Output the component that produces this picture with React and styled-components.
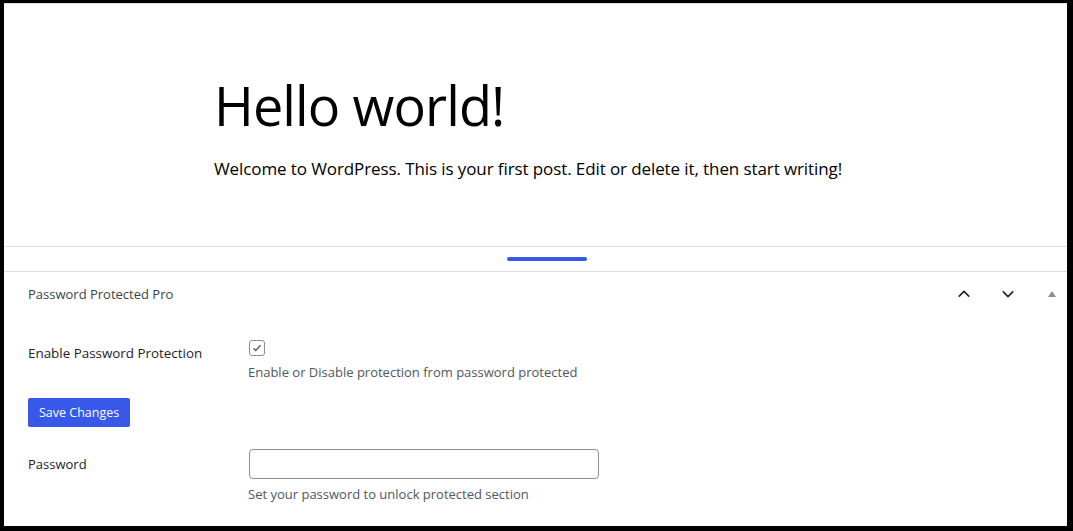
import React from "react";
import styled, { createGlobalStyle } from "styled-components";

const GlobalStyle = createGlobalStyle`
  html, body {
    margin: 0;
    padding: 0;
    background: #fff;
  }
  body {
    font-family: "Open Sans", "Noto Sans", "Liberation Sans", sans-serif;
  }
`;

const Frame = styled.div`
  box-sizing: border-box;
  width: 1073px;
  height: 531px;
  border-style: solid;
  border-color: #000;
  border-width: 3px 6px 5px 4px;
  background: #fff;
  overflow: hidden;
  display: flex;
  flex-direction: column;
`;

const Post = styled.div`
  height: 243px;
  flex-shrink: 0;
  border-top: 1px solid #e0e0e0;
  padding: 0 0 0 210px;
  box-sizing: border-box;
`;

const Title = styled.h1`
  margin: 66px 0 0;
  font-size: 54px;
  font-weight: 400;
  line-height: 70px;
  color: #000;
  letter-spacing: -0.9px;
`;

const Lead = styled.p`
  margin: 16px 0 0;
  font-size: 17px;
  line-height: 26px;
  color: #000;
  letter-spacing: -0.1px;
`;

const Resizer = styled.div`
  height: 24px;
  flex-shrink: 0;
  border-top: 1px solid #dcdcde;
  border-bottom: 1px solid #dcdcde;
  display: flex;
  justify-content: center;
  align-items: center;
`;

const Handle = styled.span`
  width: 80px;
  height: 4px;
  border-radius: 2px;
  background: #3858e9;
  margin-left: 22px;
`;

const Panel = styled.section`
  flex: 1;
  padding: 0 0 0 24px;
`;

const PanelHeader = styled.div`
  box-sizing: border-box;
  height: 45px;
  padding: 0 14px 2px 0;
  display: flex;
  align-items: center;
`;

const PanelTitle = styled.h2`
  flex: 1;
  margin: 0;
  font-size: 13px;
  font-weight: 400;
  color: #3c434a;
`;

const IconButton = styled.button`
  width: 44px;
  height: 32px;
  padding: 0;
  border: 0;
  background: none;
  display: flex;
  align-items: center;
  justify-content: center;
  color: #1e1e1e;
`;

const Toggle = styled.span`
  width: 0;
  height: 0;
  margin-left: 18px;
  margin-right: -3px;
  border-left: 4px solid transparent;
  border-right: 4px solid transparent;
  border-bottom: 6px solid #8c8f94;
`;

const Form = styled.div`
  padding-top: 23px;
  display: flex;
  flex-direction: column;
`;

const Row = styled.div`
  display: grid;
  grid-template-columns: 220px 1fr;
  align-items: start;
`;

const Label = styled.label`
  font-size: ${(p) => (p.$large ? 13.4 : 13)}px;
  color: #1d2327;
  padding-top: ${(p) => p.$top}px;
`;

const Field = styled.div`
  display: flex;
  flex-direction: column;
  align-items: flex-start;
`;

const Check = styled.span`
  box-sizing: border-box;
  width: 16px;
  height: 16px;
  border: 1px solid #8c8f94;
  border-radius: 3px;
  margin-left: 1px;
  display: flex;
  align-items: center;
  justify-content: center;
`;

const Help = styled.p`
  margin: ${(p) => p.$top}px 0 0;
  font-size: 13px;
  color: #50575e;
`;

const SaveButton = styled.button`
  align-self: flex-start;
  margin: 17px 0 22px;
  height: 29px;
  padding: 0 11px;
  border: 0;
  border-radius: 2px;
  background: #3858e9;
  color: #fff;
  font-family: inherit;
  font-size: 12.5px;
`;

const TextInput = styled.input`
  box-sizing: border-box;
  width: 350px;
  height: 30px;
  border: 1px solid #8c8f94;
  border-radius: 4px;
  margin-left: 1px;
`;

export default function App() {
  return (
    <>
      <GlobalStyle />
      <Frame>
        <Post>
          <Title>Hello world!</Title>
          <Lead>
            Welcome to WordPress. This is your first post. Edit or delete it,
            then start writing!
          </Lead>
        </Post>
        <Resizer>
          <Handle />
        </Resizer>
        <Panel>
          <PanelHeader>
            <PanelTitle>Password Protected Pro</PanelTitle>
            <IconButton aria-label="Move up">
              <svg width="18" height="18" viewBox="0 0 24 24" fill="none" stroke="currentColor" strokeWidth="2">
                <path d="M5 15.5l7-7 7 7" />
              </svg>
            </IconButton>
            <IconButton aria-label="Move down">
              <svg width="18" height="18" viewBox="0 0 24 24" fill="none" stroke="currentColor" strokeWidth="2">
                <path d="M5 8.5l7 7 7-7" />
              </svg>
            </IconButton>
            <Toggle />
          </PanelHeader>
          <Form>
            <Row>
              <Label $large $top={4}>Enable Password Protection</Label>
              <Field>
                <Check>
                  <svg width="12" height="12" viewBox="0 0 24 24" fill="none" stroke="#50575e" strokeWidth="2.5">
                    <path d="M5 12.5l4.5 4.5L19 6.5" />
                  </svg>
                </Check>
                <Help $top={7}>Enable or Disable protection from password protected</Help>
              </Field>
            </Row>
            <SaveButton>Save Changes</SaveButton>
            <Row>
              <Label $top={6}>Password</Label>
              <Field>
                <TextInput type="password" />
                <Help $top={6}>Set your password to unlock protected section</Help>
              </Field>
            </Row>
          </Form>
        </Panel>
      </Frame>
    </>
  );
}
